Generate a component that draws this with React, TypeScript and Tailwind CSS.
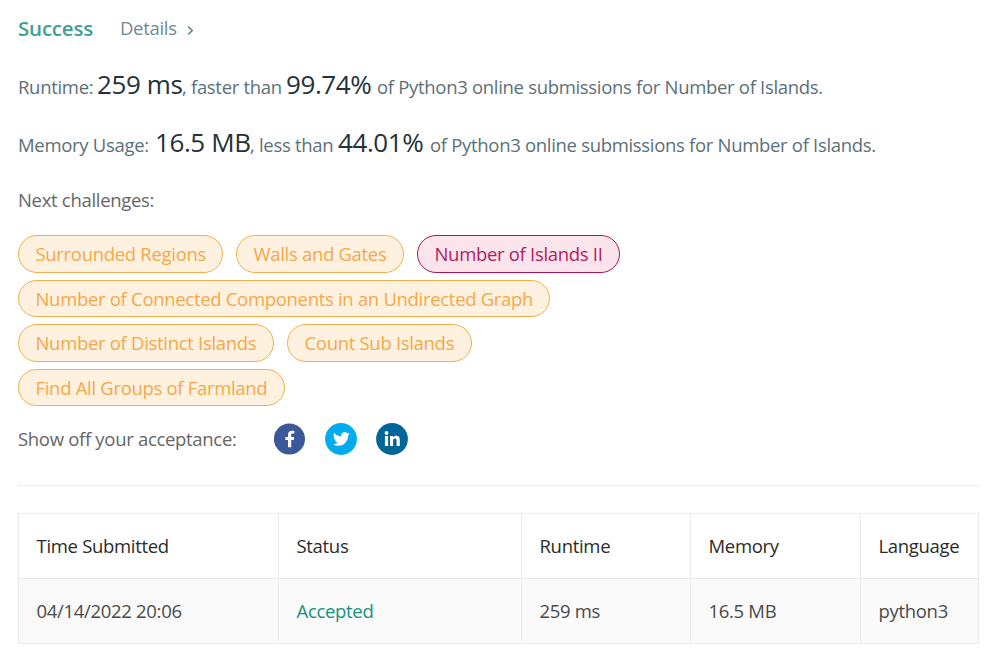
import React from "react";

type Challenge = { title: string; width: string; hard?: boolean };

const challengeRows: { height: string; items: Challenge[] }[] = [
  {
    height: "h-[38px]",
    items: [
      { title: "Surrounded Regions", width: "w-[205px]" },
      { title: "Walls and Gates", width: "w-[168px]" },
      { title: "Number of Islands II", width: "w-[203px]", hard: true },
    ],
  },
  {
    height: "h-[37px] leading-[37px]",
    items: [{ title: "Number of Connected Components in an Undirected Graph", width: "w-[532px]" }],
  },
  {
    height: "h-[38px]",
    items: [
      { title: "Number of Distinct Islands", width: "w-[256px]" },
      { title: "Count Sub Islands", width: "w-[185px]" },
    ],
  },
  {
    height: "h-[37px] leading-[37px]",
    items: [{ title: "Find All Groups of Farmland", width: "w-[267px]" }],
  },
];

function Pill({ title, width, hard }: Challenge) {
  const tone = hard
    ? "border-[#ad1457] bg-[#fce4ec] text-[#b01c60]"
    : "border-[#efb14d] bg-[#fff1df] text-[#f4a84a]";
  return (
    <a className={`flex h-full shrink-0 items-center whitespace-nowrap rounded-full border pl-[16.5px] ${width} ${tone}`}>
      {title}
    </a>
  );
}

function Strong({ children, className }: { children: React.ReactNode; className: string }) {
  return <span className={`text-[26px] tracking-[-0.4px] text-[#263238] ${className}`}>{children}</span>;
}

export default function App() {
  return (
    <main className="h-[667px] w-[993px] overflow-hidden bg-white px-[18px] font-['Open_Sans','Noto_Sans',sans-serif] text-[18.5px] font-normal tracking-[-0.31px] text-[#666666]">
      <header className="flex h-[56px] items-center">
        <h1 className="w-[102px] text-[20.5px] leading-[30px] font-semibold tracking-[-0.2px] text-[#3fa195]">Success</h1>
        <a className="flex items-center text-[#6f8995]">
          <span className="w-[67px]">Details</span>
          <svg className="mt-1 h-[9px] w-[7px]" viewBox="0 0 7 9" fill="none" stroke="currentColor" strokeWidth="1.7">
            <path d="M1.2 0.7 5.2 4.5 1.2 8.3" />
          </svg>
        </a>
      </header>

      <p className="flex h-[58px] items-baseline whitespace-pre leading-[56px] text-[#5c7079]">
        <span className="w-[79px]">Runtime:</span>
        <Strong className="w-[85px]">259 ms</Strong>
        <span className="w-[104px]">, faster than</span>
        <Strong className="w-[91px]">99.74%</Strong>
        <span>of Python3 online submissions for Number of Islands.</span>
      </p>
      <p className="flex h-[58px] items-baseline whitespace-pre leading-[56px] text-[#5c7079]">
        <span className="w-[137px]">Memory Usage:</span>
        <Strong className="w-[95px]">16.5 MB</Strong>
        <span className="w-[88px]">, less than</span>
        <Strong className="w-[92px]">44.01%</Strong>
        <span>of Python3 online submissions for Number of Islands.</span>
      </p>

      <h2 className="h-[63px] pt-[14px] leading-[27px]">Next challenges:</h2>

      <div className="flex flex-col gap-[7px] leading-[28px]">
        {challengeRows.map((row, i) => (
          <div key={i} className={`flex gap-[13px] ${row.height}`}>
            {row.items.map((item) => (
              <Pill key={item.title} {...item} />
            ))}
          </div>
        ))}
      </div>

      <div className="mt-[17px] flex h-[32px] items-center">
        <span className="w-[256px]">Show off your acceptance:</span>
        <div className="flex gap-[19px]">
          <svg className="size-8" viewBox="0 0 32 32">
            <circle cx="15.4" cy="16" r="15.6" fill="#3b5998" />
            <path fill="#fff" d="M17.2 24.2v-7.3h2.6l.4-3h-3V12c0-.9.3-1.4 1.5-1.4h1.6V7.9c-.4-.1-1.3-.2-2.3-.2-2.4 0-4 1.4-4 4v2.2h-2.6v3H14v7.3Z" />
          </svg>
          <svg className="size-8" viewBox="0 0 32 32">
            <circle cx="16" cy="16" r="15.9" fill="#00aced" />
            <g transform="translate(8 7.6) scale(.7)">
              <path fill="#fff" d="M23.95 4.57a10 10 0 0 1-2.82.77 4.96 4.96 0 0 0 2.16-2.72c-.95.55-2 .95-3.13 1.18a4.92 4.92 0 0 0-8.38 4.48C7.69 8.1 4.07 6.13 1.64 3.16a4.92 4.92 0 0 0 1.52 6.57 4.9 4.9 0 0 1-2.23-.61v.06c0 2.39 1.7 4.38 3.95 4.83a5 5 0 0 1-2.21.08 4.94 4.94 0 0 0 4.6 3.42A9.87 9.87 0 0 1 0 19.54a13.99 13.99 0 0 0 7.56 2.21c9.05 0 14-7.5 14-13.98 0-.21 0-.42-.02-.63a9.94 9.94 0 0 0 2.41-2.57Z" />
            </g>
          </svg>
          <svg className="size-8" viewBox="0 0 32 32">
            <circle cx="16" cy="16" r="15.9" fill="#006699" />
            <circle cx="10.5" cy="10" r="1.9" fill="#fff" />
            <path fill="#fff" d="M8.9 13h3.2v10.1H8.9zM14 13h3v1.4c.6-1 1.6-1.7 3.1-1.7 3.1 0 3.7 2 3.7 4.8v5.6h-3.2v-5c0-1.3-.1-2.7-1.7-2.7s-1.8 1.3-1.8 2.6v5.1H14z" />
          </svg>
        </div>
      </div>

      <hr className="mt-[30px] w-[961px] border-[#eeeeee]" />

      <table className="mt-[27px] w-[961px] table-fixed border-collapse text-left text-[#4a4a4a]">
        <colgroup>
          <col className="w-[260px]" />
          <col className="w-[243px]" />
          <col className="w-[169px]" />
          <col className="w-[170px]" />
          <col className="w-[118px]" />
        </colgroup>
        <thead>
          <tr className="h-[65px] text-[#2b2b2b]">
            {["Time Submitted", "Status", "Runtime", "Memory", "Language"].map((label) => (
              <th key={label} className="whitespace-nowrap border border-[#ebebeb] pl-[17.5px] font-normal">
                {label}
              </th>
            ))}
          </tr>
        </thead>
        <tbody>
          <tr className="h-[65px] bg-[#fafafa]">
            <td className="border border-[#ebebeb] pl-[17.5px]">04/14/2022 20:06</td>
            <td className="border border-[#ebebeb] pl-[17.5px] text-[#16917f]">Accepted</td>
            <td className="border border-[#ebebeb] pl-[17.5px]">259 ms</td>
            <td className="border border-[#ebebeb] pl-[17.5px]">16.5 MB</td>
            <td className="border border-[#ebebeb] pl-[17.5px]">python3</td>
          </tr>
        </tbody>
      </table>
    </main>
  );
}
